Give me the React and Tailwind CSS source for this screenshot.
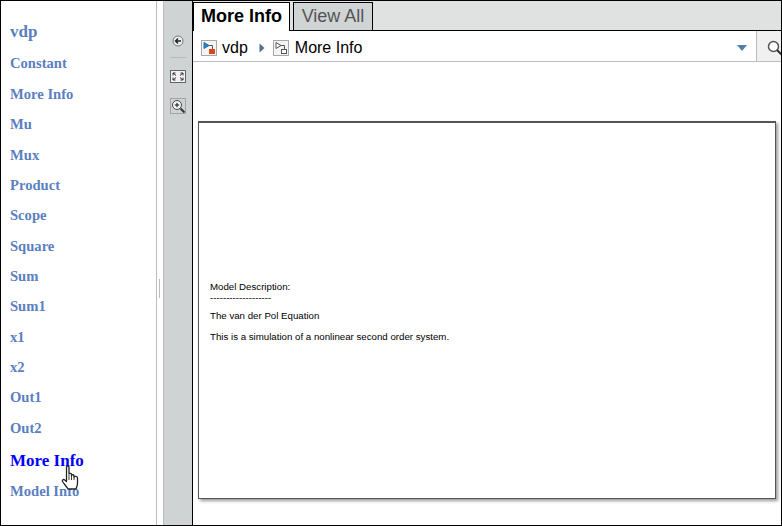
const items = ['Constant', 'More Info', 'Mu', 'Mux', 'Product', 'Scope', 'Square', 'Sum', 'Sum1', 'x1', 'x2', 'Out1', 'Out2'];

function ModelIcon({ sub }) {
  return (
    <svg width="16" height="16" viewBox="0 0 16 16" className="shrink-0">
      <rect x="0.5" y="0.5" width="15" height="15" fill="#f4f4f4" stroke="#a8a8a8" />
      <path d="M3 2.5 L8 5.5 L3 8.5 Z" fill={sub ? '#fff' : '#2f7fc0'} stroke={sub ? '#555' : '#1f6fb0'} />
      <path d="M8 5.5 H11.5 V9" fill="none" stroke="#555" />
      {sub ? (
        <rect x="8.5" y="9.5" width="5" height="4" fill="#fff" stroke="#555" />
      ) : (
        <rect x="8" y="9" width="6" height="5" fill="#d9481c" />
      )}
    </svg>
  );
}

function HandCursor() {
  return (
    <svg width="20" height="26" viewBox="0 0 20 26" className="absolute left-[60px] top-[464px]">
      <path
        d="M5.5 2 C5.5 0.8 8 0.8 8 2 V9 C8.5 8 10.5 8 10.5 9.5 V10.5 C11 9.3 13 9.5 13 11 V12 C13.5 11 16.5 11.2 16.5 13 V18 C16.5 21 15.5 22 15 24 H7 C6 22 3 19 1.5 16.5 C0.8 15 2.5 13.8 3.8 15 L5.5 16.5 Z"
        fill="#fff"
        stroke="#222"
        strokeWidth="1.3"
        strokeLinejoin="round"
      />
      <path d="M8 10 V15 M10.5 10.5 V15 M13 12 V15" stroke="#222" strokeWidth="0.9" />
    </svg>
  );
}

export default function App() {
  return (
    <div className="relative flex h-[526px] w-[782px] overflow-hidden border border-black bg-white">
      {/* LEFT LIST */}
      <div className="w-[156px] shrink-0 border-r border-[#b9bcc4] pl-[9px] pt-[15px] font-['Liberation_Serif',serif] font-bold text-[14.6px] text-[#5b7fc1]">
        <div className="flex h-[30px] items-center text-[17px] leading-none">vdp</div>
        <div className="h-[2.6px]" />
        {items.map((item) => (
          <div key={item} className="flex h-[30.35px] items-center leading-none">
            {item}
          </div>
        ))}
        <div className="flex h-[33px] items-center pt-px text-[17px] leading-none text-[#0000ff]">More Info</div>
        <div className="flex h-[31px] items-center leading-none">Model Info</div>
      </div>

      {/* SPLITTER */}
      <div className="flex w-[6px] shrink-0 items-center">
        <div className="ml-[2px] mt-[50px] h-[19px] w-px bg-[#b9bcc4]" />
      </div>

      {/* TOOLBAR */}
      <div className="flex w-[30px] shrink-0 flex-col items-center border-l border-[#b9bcc4] border-r border-r-black bg-[#cfd3d4] pt-[34px]">
        <svg width="12" height="12" viewBox="0 0 12 12">
          <circle cx="6" cy="6" r="5" fill="#eee" stroke="#777" />
          <path d="M9 6 H4 M6 3.5 L3.5 6 L6 8.5" fill="none" stroke="#222" strokeWidth="1.4" />
        </svg>
        <div className="mt-[10px] h-px w-[16px] bg-[#b5babc]" />
        <svg width="16" height="13" viewBox="0 0 16 13" className="mt-[12px]">
          <rect x="0.5" y="0.5" width="15" height="12" fill="#f2f2f2" stroke="#666" />
          <path d="M3 3 L6 5.5 M3 3 H5.5 M3 3 V5.5 M13 3 L10 5.5 M13 3 H10.5 M13 3 V5.5 M3 10 L6 7.5 M3 10 H5.5 M3 10 V7.5 M13 10 L10 7.5 M13 10 H10.5 M13 10 V7.5" stroke="#333" fill="none" />
        </svg>
        <svg width="16" height="16" viewBox="0 0 16 16" className="mt-[15px]">
          <rect x="0.5" y="0.5" width="15" height="15" fill="none" stroke="#777" strokeDasharray="1 1" />
          <circle cx="7" cy="7" r="4.5" fill="#f5f5f5" stroke="#444" />
          <path d="M4.8 7 H9.2 M7 4.8 V9.2" stroke="#111" />
          <path d="M10.5 10.5 L14.5 14.5" stroke="#333" strokeWidth="2" />
        </svg>
      </div>

      {/* MAIN */}
      <div className="flex min-w-0 flex-1 flex-col font-['Liberation_Sans',sans-serif]">
        <div className="flex h-[30px] items-end border-b border-black bg-[#e0e2e1] pt-px">
          <div className="relative -mb-px flex h-[29px] w-[97px] items-center justify-center border border-b-0 border-black bg-white pb-px text-[18px] font-bold text-black">
            More Info
          </div>
          <div className="ml-[3px] flex h-[28px] w-[80px] items-center justify-center border border-b-0 border-black bg-[#d0d4d5] text-[18px] text-[#555]">
            View All
          </div>
        </div>

        <div className="flex h-[31px] items-center border-b border-[#b9bcc4] pl-[8px] pt-[3px] text-[16px] text-black">
          <ModelIcon />
          <span className="ml-[5px]">vdp</span>
          <svg width="6" height="10" viewBox="0 0 6 10" className="ml-[11px]">
            <path d="M0.5 0.5 L5.5 5 L0.5 9.5 Z" fill="#4f7090" />
          </svg>
          <span className="ml-[8px]"><ModelIcon sub /></span>
          <span className="ml-[6px]">More Info</span>
          <svg width="10" height="6" viewBox="0 0 10 6" className="ml-auto">
            <path d="M0 0 H10 L5 6 Z" fill="#4f7fa8" />
          </svg>
          <div className="ml-[9px] -mt-[3px] flex h-[30px] w-[25px] items-center overflow-hidden border-l border-[#b9bcc4] bg-[#f0f0f0] pl-[10px] pt-[3px]">
            <svg width="16" height="16" viewBox="0 0 16 16" className="shrink-0">
              <circle cx="6.5" cy="6.5" r="5" fill="#fff" stroke="#555" strokeWidth="1.5" />
              <path d="M10 10 L15 15" stroke="#333" strokeWidth="2" />
            </svg>
          </div>
        </div>

        <div className="flex-1 pl-[5px] pt-[59px]">
          <div className="flex h-[378px] w-[578px] flex-col border border-[#555] border-t-2 bg-white pl-[11px] pt-[158px] font-['Liberation_Sans',sans-serif] text-[9.7px] leading-[12px] text-black shadow-[2px_2px_3px_rgba(0,0,0,0.4)]">
            <div>Model Description:</div>
            <div className="h-[10px] overflow-hidden leading-[9px]">-------------------</div>
            <div className="mt-[7px]">The van der Pol Equation</div>
            <div className="mt-[9px]">This is a simulation of a nonlinear second order system.</div>
          </div>
        </div>
      </div>

      <HandCursor />
    </div>
  );
}
